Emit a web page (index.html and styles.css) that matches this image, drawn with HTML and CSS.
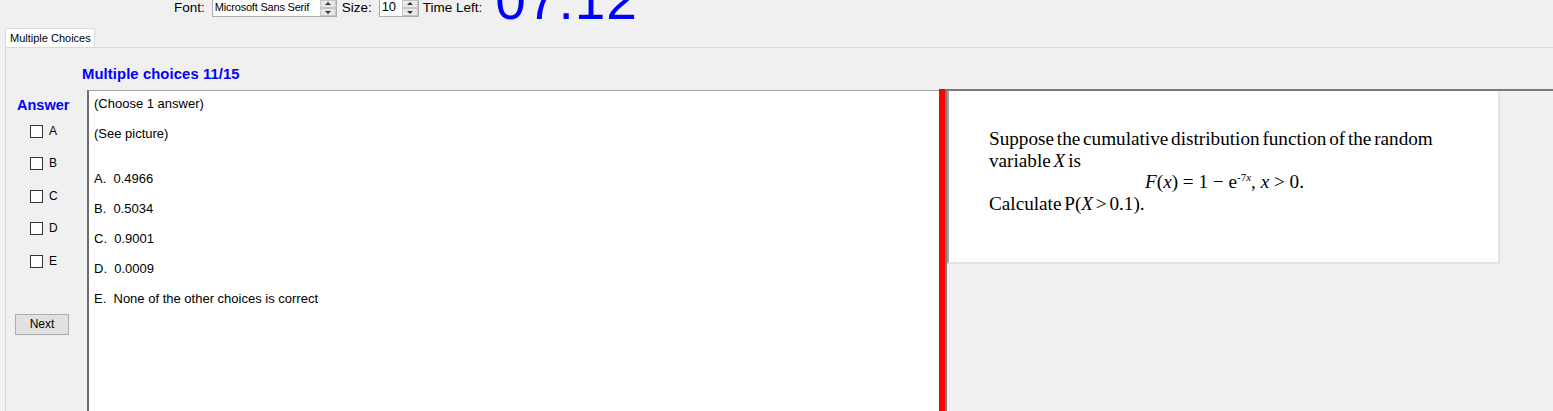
FILE: index.html
```html
<!DOCTYPE html>
<html>
<head>
<meta charset="utf-8">
<link rel="stylesheet" href="styles.css">
</head>
<body>
<div class="toolbar">
  <span class="lbl">Font:</span>
  <div class="combo font-combo">
    <span class="combo-text">Microsoft Sans Serif</span>
    <div class="spin"><span class="up"></span><span class="down"></span></div>
  </div>
  <span class="lbl size-lbl">Size:</span>
  <div class="combo size-combo">
    <span class="combo-text big">10</span>
    <div class="spin"><span class="up"></span><span class="down"></span></div>
  </div>
  <span class="lbl time-lbl">Time Left:</span>
  <span class="timer">07:12</span>
</div>
<div class="tabs">
  <div class="tab">Multiple Choices</div>
</div>
<div class="panel">
  <div class="title">Multiple choices 11/15</div>
  <div class="main">
    <div class="answers">
      <div class="ans-title">Answer</div>
      <label class="opt"><span class="box"></span>A</label>
      <label class="opt"><span class="box"></span>B</label>
      <label class="opt"><span class="box"></span>C</label>
      <label class="opt"><span class="box"></span>D</label>
      <label class="opt"><span class="box"></span>E</label>
      <button class="next">Next</button>
    </div>
    <div class="question">
      <div class="q-line">(Choose 1 answer)</div>
      <div class="q-line">(See picture)</div>
      <div class="q-choices">
        <div class="q-line">A.&nbsp; 0.4966</div>
        <div class="q-line">B.&nbsp; 0.5034</div>
        <div class="q-line">C.&nbsp; 0.9001</div>
        <div class="q-line">D.&nbsp; 0.0009</div>
        <div class="q-line">E.&nbsp; None of the other choices is correct</div>
      </div>
    </div>
    <div class="splitter"></div>
    <div class="right">
      <div class="picture">
        <div class="p-line">Suppose the cumulative distribution function of the random</div>
        <div class="p-line">variable <i>X</i> is</div>
        <div class="p-line formula"><i>F</i>(<i>x</i>) = 1 &minus; e<sup>-7<i>x</i></sup>, <i>x</i> &gt; 0.</div>
        <div class="p-line">Calculate P(<i>X</i> &gt; 0.1).</div>
      </div>
    </div>
  </div>
</div>
</body>
</html>
```
FILE: styles.css
```css
html, body {
  margin: 0;
  padding: 0;
  width: 1553px;
  height: 411px;
  overflow: hidden;
  background: #f0f0f0;
  font-family: "Liberation Sans", Arial, sans-serif;
  color: #000;
}

.toolbar {
  height: 28px;
  display: flex;
  align-items: flex-start;
  padding-left: 174px;
  overflow: hidden;
  font-size: 13.5px;
}

.lbl {
  line-height: 15px;
  margin-top: 0;
}

.combo {
  display: flex;
  background: #fff;
  border: 1px solid #abadb3;
  border-top: none;
  height: 17px;
  margin-left: 7px;
  box-sizing: border-box;
}

.font-combo { width: 125px; }
.size-combo { width: 40px; margin-left: 7px; }
.size-lbl { margin-left: 5px; }
.time-lbl { margin-left: 4px; }

.combo-text {
  flex: 1;
  font-size: 11px;
  line-height: 14px;
  padding-left: 2px;
  letter-spacing: -0.2px;
}
.combo-text.big { font-size: 13px; line-height: 14px; }

.spin {
  width: 16px;
  display: flex;
  flex-direction: column;
}
.spin span {
  flex: 1;
  background: #e8e8e8;
  border: 1px solid #c4c4c4;
  position: relative;
}
.spin .up::after, .spin .down::after {
  content: "";
  position: absolute;
  left: 4px;
  border-left: 3px solid transparent;
  border-right: 3px solid transparent;
}
.spin .up::after { top: 1px; border-bottom: 3px solid #333; }
.spin .down::after { top: 2px; border-top: 3px solid #333; }

.timer {
  font-size: 55px;
  line-height: 55px;
  color: #0000ff;
  margin-top: -27px;
  margin-left: 13px;
  letter-spacing: 1px;
}

.tabs {
  height: 19px;
  display: flex;
  padding-left: 5px;
}
.tab {
  width: 90px;
  height: 19px;
  box-sizing: border-box;
  background: #fff;
  border: 1px solid #d9d9d9;
  border-bottom: none;
  font-size: 11px;
  line-height: 18px;
  padding-left: 4px;
}

.panel {
  margin-left: 5px;
  border-left: 1px solid #d9d9d9;
  border-top: 1px solid #d9d9d9;
  height: 364px;
  display: flex;
  flex-direction: column;
}

.title {
  height: 42px;
  box-sizing: border-box;
  padding-left: 76px;
  padding-top: 18px;
  font-weight: bold;
  font-size: 14.8px;
  color: #0000ff;
  line-height: 16px;
  letter-spacing: 0.1px;
}

.main {
  flex: 1;
  display: flex;
}

.answers {
  width: 81px;
  display: flex;
  flex-direction: column;
  align-items: flex-start;
}

.ans-title {
  margin-left: 11px;
  margin-top: 7px;
  font-weight: bold;
  color: #0000ff;
  font-size: 14.5px;
  line-height: 16px;
  margin-bottom: 12px;
}

.opt {
  display: flex;
  align-items: flex-start;
  margin-left: 24px;
  height: 32.4px;
  font-size: 12px;
  line-height: 12px;
}
.box {
  width: 13px;
  height: 13px;
  box-sizing: border-box;
  border: 1px solid #333;
  background: #fff;
  margin-right: 6px;
}

.next {
  margin-left: 9px;
  margin-top: 27px;
  width: 54px;
  height: 21px;
  background: #e1e1e1;
  border: 1px solid #adadad;
  font-family: "Liberation Sans", Arial, sans-serif;
  font-size: 12px;
  padding: 0;
  color: #000;
}

.question {
  width: 852px;
  background: #fff;
  border-left: 2px solid #6d6d6d;
  border-top: 1px solid #a0a0a0;
  box-sizing: border-box;
  padding-left: 5px;
  padding-top: 5px;
  font-size: 13px;
}
.q-line {
  height: 30px;
  line-height: 15px;
}
.q-choices {
  margin-top: 15px;
}

.splitter {
  width: 6px;
  background: #ff0000;
  margin-top: -1px;
}

.right {
  flex: 1;
  border-left: 2px solid #7a7a7a;
  border-top: 2px solid #7a7a7a;
  margin-top: -1px;
  background: #f0f0f0;
}

.picture {
  width: 553px;
  height: 173px;
  box-sizing: border-box;
  background: #fff;
  border-left: 2px solid #a0a0a0;
  border-right: 2px solid #e3e3e3;
  border-bottom: 2px solid #e3e3e3;
  padding-left: 40px;
  padding-top: 37px;
  font-family: "Liberation Serif", "Times New Roman", serif;
  font-size: 19.2px;
  line-height: 21.5px;
}
.p-line { white-space: nowrap; word-spacing: -2px; }
.formula { padding-left: 156px; word-spacing: 0; }
.formula sup {
  font-size: 11px;
  line-height: 0;
  vertical-align: 7px;
}
```
